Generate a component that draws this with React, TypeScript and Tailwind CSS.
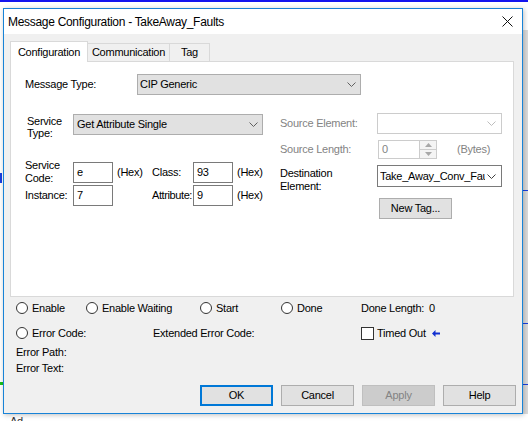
import React from "react";

const Chevron = ({ color = "#606060" }: { color?: string }) => (
  <svg width="9" height="5" viewBox="0 0 9 5" className="shrink-0">
    <polyline points="0.5,0.5 4.5,4.5 8.5,0.5" fill="none" stroke={color} strokeWidth="1" />
  </svg>
);

const Radio = () => (
  <span className="inline-block h-[12px] w-[12px] shrink-0 rounded-full border border-[#333333] bg-white" />
);

const Field = ({ value }: { value: string }) => (
  <div className="flex h-[21px] w-[40px] items-center border border-[#7a7a7a] bg-white pl-[3px]">{value}</div>
);

const Btn = ({ label, kind }: { label: string; kind?: "default" | "disabled" }) => {
  if (kind === "default")
    return (
      <div className="flex h-[21px] w-[73px] items-center justify-center border-2 border-[#0078d7] bg-[#e1e1e1]">{label}</div>
    );
  if (kind === "disabled")
    return (
      <div className="flex h-[21px] w-[73px] items-center justify-center border border-[#bfbfbf] bg-[#cccccc] text-[#838383]">
        {label}
      </div>
    );
  return (
    <div className="flex h-[21px] w-[73px] items-center justify-center border border-[#adadad] bg-[#e1e1e1]">{label}</div>
  );
};

export default function App() {
  return (
    <div className="relative h-[421px] w-[528px] overflow-hidden bg-white font-['Liberation_Sans',Arial,sans-serif] text-[11px] tracking-[-0.25px] text-black">
      {/* desktop behind the window */}
      <div className="absolute left-0 top-0 h-[2px] w-full bg-[#1414ee]" />
      <div className="absolute left-[523px] top-[30px] h-[384px] w-[5px] bg-[#dcdcdc]" />
      <div className="absolute left-[523px] top-[190px] h-[1px] w-[5px] bg-[#1a3fe0]" />
      <div className="absolute left-[523px] top-[323px] h-[1px] w-[5px] bg-[#1a3fe0]" />
      <div className="absolute left-[523px] top-[384px] h-[1px] w-[5px] bg-[#1a3fe0]" />
      <div className="absolute left-0 top-[173px] h-[10px] w-[2px] bg-[#1a3fe0]" />
      <div className="absolute left-0 top-[382px] h-[3px] w-[3px] bg-[#19c019]" />
      <div className="absolute left-[10px] top-[413px] text-[#333333]">Ad</div>

      {/* dialog window */}
      <div className="absolute left-[3px] top-[8px] flex h-[406px] w-[520px] flex-col border border-[#1883d7] bg-[#f0f0f0] shadow-[1px_1px_5px_rgba(0,0,0,0.25)]">
        <div className="flex h-[25px] items-center justify-between bg-white pl-[4px] pr-[9px] text-[12px] tracking-[-0.3px]">
          <span>Message Configuration - TakeAway_Faults</span>
          <svg width="11" height="11" viewBox="0 0 11 11">
            <line x1="0.5" y1="0.5" x2="10.5" y2="10.5" stroke="#111" strokeWidth="1" />
            <line x1="10.5" y1="0.5" x2="0.5" y2="10.5" stroke="#111" strokeWidth="1" />
          </svg>
        </div>

        <div className="flex flex-1 flex-col pl-[6px] pr-[6px] pt-[7px]">
          {/* tabs */}
          <div className="flex h-[20px] items-end">
            <div className="relative z-10 -mb-px flex h-[21px] w-[78px] items-center justify-center border border-b-0 border-[#d9d9d9] bg-white">
              Configuration
            </div>
            <div className="flex h-[18px] w-[82px] items-center justify-center border-r border-t border-[#d9d9d9]">
              Communication
            </div>
            <div className="flex h-[18px] w-[40px] items-center justify-center border-r border-t border-[#d9d9d9]">
              Tag
            </div>
          </div>

          {/* tab panel */}
          <div className="flex h-[236px] w-[504px] flex-col border border-[#d9d9d9] bg-white pl-[14px]">
            <div className="mt-[12px] flex items-center">
              <div className="w-[112px]">Message Type:</div>
              <div className="flex h-[21px] w-[224px] items-center justify-between border border-[#adadad] bg-[#e1e1e1] pl-[2px] pr-[4px]">
                <span>CIP Generic</span>
                <Chevron />
              </div>
            </div>

            <div className="mt-[18px] flex">
              {/* left column */}
              <div className="flex w-[255px] flex-col">
                <div className="mt-[1px] flex h-[21px] items-start">
                  <div className="mt-[1px] w-[48px] pl-[2px] leading-[12px]">
                    Service
                    <br />
                    Type:
                  </div>
                  <div className="flex h-[21px] w-[190px] items-center justify-between border border-[#adadad] bg-[#e1e1e1] pl-[3px] pr-[4px]">
                    <span>Get Attribute Single</span>
                    <Chevron />
                  </div>
                </div>

                <div className="mt-[24px] grid h-[21px] grid-cols-[48px_40px_39px_41px_40px_auto] items-center">
                  <div className="leading-[13px]">
                    Service
                    <br />
                    Code:
                  </div>
                  <Field value="e" />
                  <div className="pl-[4px]">(Hex)</div>
                  <div>Class:</div>
                  <Field value="93" />
                  <div className="pl-[4px]">(Hex)</div>
                </div>

                <div className="mt-[5px] grid h-[21px] grid-cols-[48px_40px_39px_41px_40px_auto] items-center">
                  <div>Instance:</div>
                  <Field value="7" />
                  <div />
                  <div className="whitespace-nowrap tracking-[-0.4px]">Attribute:</div>
                  <Field value="9" />
                  <div className="pl-[4px]">(Hex)</div>
                </div>
              </div>

              {/* right column */}
              <div className="flex flex-col">
                <div className="flex h-[21px] items-center">
                  <div className="w-[97px] text-[#838383]">Source Element:</div>
                  <div className="flex h-[21px] w-[125px] items-center justify-end border border-[#cccccc] bg-white pr-[5px]">
                    <Chevron color="#bdbdbd" />
                  </div>
                </div>

                <div className="mt-[6px] flex h-[19px] items-center">
                  <div className="w-[98px] text-[#838383]">Source Length:</div>
                  <div className="flex h-[19px] w-[42px] items-center border border-[#cccccc] bg-white pl-[3px] text-[#838383]">
                    0
                  </div>
                  <div className="flex h-[19px] w-[17px] flex-col border border-l-0 border-[#cccccc] bg-[#f4f4f4]">
                    <div className="flex flex-1 items-center justify-center border-b border-[#cccccc]">
                      <svg width="7" height="4" viewBox="0 0 7 4">
                        <polygon points="0,4 3.5,0 7,4" fill="#a8a8a8" />
                      </svg>
                    </div>
                    <div className="flex flex-1 items-center justify-center">
                      <svg width="7" height="4" viewBox="0 0 7 4">
                        <polygon points="0,0 3.5,4 7,0" fill="#a8a8a8" />
                      </svg>
                    </div>
                  </div>
                  <div className="ml-[20px] text-[#838383]">(Bytes)</div>
                </div>

                <div className="mt-[6px] flex items-start">
                  <div className="mt-[2px] w-[97px] leading-[13px]">
                    Destination
                    <br />
                    Element:
                  </div>
                  <div className="flex h-[22px] w-[125px] items-center border border-[#7a7a7a] bg-white pl-[2px] pr-[5px]">
                    <span className="flex-1 overflow-hidden whitespace-nowrap">Take_Away_Conv_Faults</span>
                    <span className="ml-[2px]">
                      <Chevron color="#404040" />
                    </span>
                  </div>
                </div>

                <div className="mt-[5px] pl-[99px]">
                  <div className="flex h-[21px] w-[73px] items-center justify-center border border-[#adadad] bg-[#e1e1e1]">
                    New Tag...
                  </div>
                </div>
              </div>
            </div>
          </div>

          {/* status area */}
          <div className="flex flex-col pl-[6px]">
            <div className="mt-[4px] flex h-[14px] items-center">
              <div className="flex w-[70px] items-center gap-[4px]">
                <Radio />
                <span>Enable</span>
              </div>
              <div className="flex w-[114px] items-center gap-[4px]">
                <Radio />
                <span>Enable Waiting</span>
              </div>
              <div className="flex w-[81px] items-center gap-[4px]">
                <Radio />
                <span>Start</span>
              </div>
              <div className="flex w-[80px] items-center gap-[4px]">
                <Radio />
                <span>Done</span>
              </div>
              <div className="flex items-center">
                <span>Done Length:</span>
                <span className="ml-[5px]">0</span>
              </div>
            </div>

            <div className="mt-[11px] flex h-[14px] items-center">
              <div className="flex w-[137px] items-center gap-[4px]">
                <Radio />
                <span>Error Code:</span>
              </div>
              <div className="w-[208px]">Extended Error Code:</div>
              <div className="flex items-center">
                <span className="inline-block h-[13px] w-[13px] border border-[#333333] bg-white" />
                <span className="ml-[3px]">Timed Out</span>
                <svg width="8" height="7" viewBox="0 0 8 7" className="ml-[6px]">
                  <path d="M0 3.5 L3.5 0 L3.5 2.5 L8 2.5 L8 4.5 L3.5 4.5 L3.5 7 Z" fill="#1230d0" />
                </svg>
              </div>
            </div>

            <div className="mt-[4px] leading-[16px]">Error Path:</div>
            <div className="leading-[16px]">Error Text:</div>
          </div>

          <div className="mt-[9px] flex justify-end gap-[8px]">
            <Btn label="OK" kind="default" />
            <Btn label="Cancel" />
            <Btn label="Apply" kind="disabled" />
            <Btn label="Help" />
          </div>
        </div>
      </div>
    </div>
  );
}
